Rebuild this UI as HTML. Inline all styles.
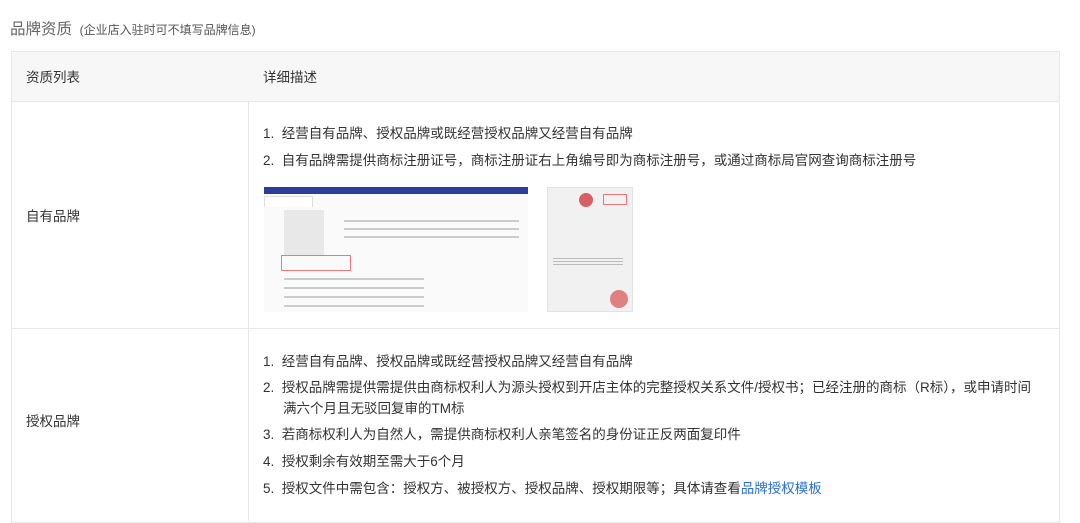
<!DOCTYPE html><html><head><meta charset="utf-8"><style>
body{margin:0;width:1080px;height:506px;overflow:hidden;background:#fff;font-family:"Liberation Sans","Noto Sans CJK SC",sans-serif;color:#333;position:relative}
.a{position:absolute;white-space:nowrap}
.t{font-size:13.5px;color:#333}
</style></head><body>
<div class="a" style="left:10px;top:17px;font-size:15.5px;color:#666">品牌资质 <span style="font-size:12px;color:#555">&nbsp;(企业店入驻时可不填写品牌信息)</span></div>
<div class="a" style="left:11px;top:51px;width:1047px;height:470px;border:1px solid #e8e8e8"></div>
<div class="a" style="left:12px;top:52px;width:1047px;height:49px;background:#f7f7f7;border-bottom:1px solid #e8e8e8"></div>
<div class="a" style="left:248px;top:101px;width:1px;height:420px;background:#e8e8e8"></div>
<div class="a" style="left:12px;top:328px;width:1047px;height:1px;background:#e8e8e8"></div>
<div class="a t" style="left:26px;top:66px">资质列表</div>
<div class="a t" style="left:263px;top:66px">详细描述</div>
<div class="a t" style="left:26px;top:205px">自有品牌</div>
<div class="a t" style="left:26px;top:410px">授权品牌</div>
<div class="a t" style="left:263px;top:122px">1.&nbsp; 经营自有品牌、授权品牌或既经营授权品牌又经营自有品牌</div>
<div class="a t" style="left:263px;top:149px">2.&nbsp; 自有品牌需提供商标注册证号，商标注册证右上角编号即为商标注册号，或通过商标局官网查询商标注册号</div>
<div class="a" style="left:264px;top:187px;width:264px;height:125px;background:#fafafa;overflow:hidden">
 <div style="height:7px;background:#2b3f9a"></div>
 <div style="position:absolute;left:0;top:9px;width:47px;height:10px;border:1px solid #ddd;border-bottom:none;background:#fff"></div>
 <div style="position:absolute;left:20px;top:23px;width:40px;height:45px;background:#e8e8e8"></div>
 <div style="position:absolute;left:80px;top:27px;width:175px;height:30px;background:repeating-linear-gradient(#fafafa 0 6px,#ccc 6px 8px)"></div>
 <div style="position:absolute;left:17px;top:68px;width:68px;height:14px;border:1px solid #e77"></div>
 <div style="position:absolute;left:20px;top:84px;width:140px;height:38px;background:repeating-linear-gradient(#fafafa 0 7px,#ccc 7px 9px)"></div>
</div>
<div class="a" style="left:547px;top:187px;width:86px;height:125px;background:#f1f1f1;border:1px solid #e2e2e2;box-sizing:border-box">
 <div style="position:absolute;left:31px;top:5px;width:14px;height:14px;border-radius:50%;background:#d86060"></div>
 <div style="position:absolute;left:55px;top:6px;width:22px;height:9px;border:1px solid #e77"></div>
 <div style="position:absolute;left:62px;top:102px;width:18px;height:18px;border-radius:50%;background:#e08080"></div>
 <div style="position:absolute;left:5px;top:68px;width:70px;height:10px;background:repeating-linear-gradient(#f1f1f1 0 2px,#bbb 2px 3px)"></div>
</div>
<div class="a t" style="left:263px;top:350px">1.&nbsp; 经营自有品牌、授权品牌或既经营授权品牌又经营自有品牌</div>
<div class="a t" style="left:263px;top:376px">2.&nbsp; 授权品牌需提供需提供由商标权利人为源头授权到开店主体的完整授权关系文件/授权书；已经注册的商标（R标），或申请时间</div>
<div class="a t" style="left:283px;top:397px">满六个月且无驳回复审的TM标</div>
<div class="a t" style="left:263px;top:423px">3.&nbsp; 若商标权利人为自然人，需提供商标权利人亲笔签名的身份证正反两面复印件</div>
<div class="a t" style="left:263px;top:450px">4.&nbsp; 授权剩余有效期至需大于6个月</div>
<div class="a t" style="left:263px;top:477px">5.&nbsp; 授权文件中需包含：授权方、被授权方、授权品牌、授权期限等；具体请查看<span style="color:#2a6fd6">品牌授权模板</span></div>
</body></html>
